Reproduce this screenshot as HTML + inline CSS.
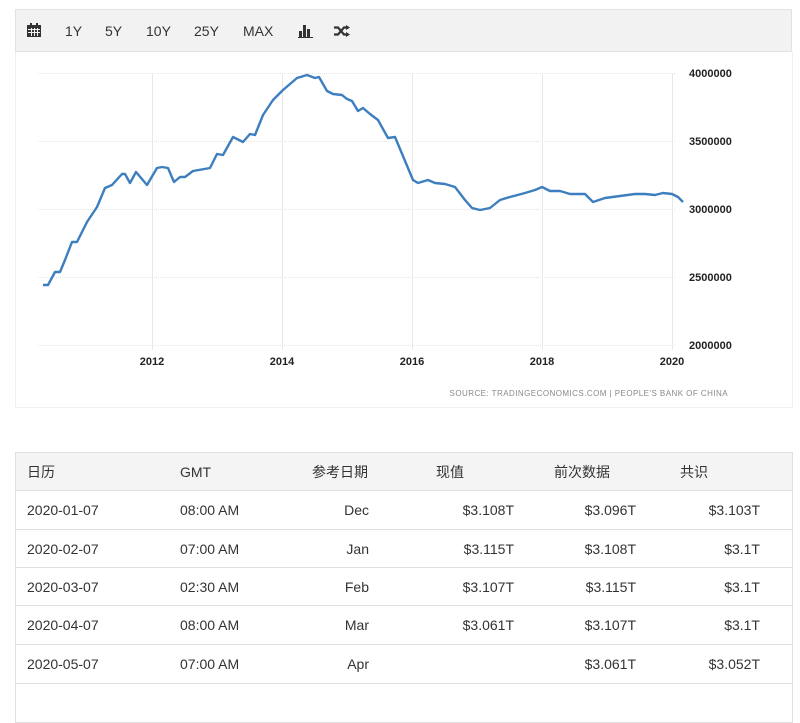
<!DOCTYPE html>
<html><head><meta charset="utf-8"><style>
body{margin:0;width:800px;height:691px;background:#fff;font-family:"Liberation Sans","Noto Sans CJK SC",sans-serif;overflow:hidden;position:relative}
.tb{position:absolute;left:15px;top:9px;width:777px;height:43px;background:#f2f2f2;border:1px solid #e2e2e2;box-sizing:border-box}
.tb span{position:absolute;top:13px;font-size:14px;color:#333}
.chart{position:absolute;left:15px;top:52px;width:778px;height:356px;border:1px solid #f0f0f0;border-top:none;box-sizing:border-box}
.row{position:absolute;left:15px;width:778px;height:39px;border:1px solid #e0e0e0;border-top:none;box-sizing:border-box;font-size:14px;color:#333}
.row.h{background:#f4f4f4;border-top:1px solid #e0e0e0}
.row span{position:absolute;top:11px;white-space:nowrap;line-height:16px}
.row .a{left:11px}.row .b{left:164px}
.row .c{right:423px}.row .d{right:278px}.row .e{right:156px}.row .f{right:32px}
</style></head><body>
<div class="tb">
<svg style="position:absolute;left:11px;top:13px" width="14" height="14" viewBox="0 0 14 14"><rect x="0" y="2" width="14" height="12" fill="#333"/><rect x="3" y="0" width="2" height="3" fill="#333"/><rect x="9" y="0" width="2" height="3" fill="#333"/><g fill="#f2f2f2"><rect x="1" y="6" width="12" height="1"/><rect x="1" y="9" width="12" height="1"/><rect x="4" y="5" width="1" height="8"/><rect x="7" y="5" width="1" height="8"/><rect x="10" y="5" width="1" height="8"/></g></svg>
<span style="left:49px">1Y</span><span style="left:89px">5Y</span><span style="left:130px">10Y</span><span style="left:178px">25Y</span><span style="left:227px">MAX</span>
<svg style="position:absolute;left:282px;top:14px" width="15" height="14" viewBox="0 0 15 14"><rect x="1" y="7" width="3" height="6" fill="#333"/><rect x="5" y="1" width="3" height="12" fill="#333"/><rect x="9" y="5" width="3" height="8" fill="#333"/><rect x="0" y="13" width="15" height="1" fill="#333"/></svg>
<svg style="position:absolute;left:318px;top:15px" width="16" height="12" viewBox="0 0 16 12"><path d="M0 2.5h4l6 7h3M0 9.5h4l6-7h3" stroke="#333" stroke-width="2.2" fill="none"/><path d="M12 0l4 2.5-4 2.5zM12 7l4 2.5-4 2.5z" fill="#333"/></svg>
</div>
<div class="chart"></div>
<svg style="position:absolute;left:0;top:0" width="800" height="410">
<g stroke="#e4e4e4" stroke-width="1" stroke-dasharray="1 1">
<line x1="38" y1="73.5" x2="676" y2="73.5"/><line x1="38" y1="141.5" x2="676" y2="141.5"/><line x1="38" y1="209.5" x2="676" y2="209.5"/><line x1="38" y1="277.5" x2="676" y2="277.5"/><line x1="38" y1="345.5" x2="676" y2="345.5"/></g>
<g stroke="#e8e8e8"><line x1="152.5" y1="73" x2="152.5" y2="350"/><line x1="282.5" y1="73" x2="282.5" y2="350"/><line x1="412.5" y1="73" x2="412.5" y2="350"/><line x1="542.5" y1="73" x2="542.5" y2="350"/><line x1="672.5" y1="73" x2="672.5" y2="350"/></g>
<polyline fill="none" stroke="#3d7ebf" stroke-width="2.4" stroke-linejoin="round" points="43,285 48,285 55,272 60,272 65,260 72,242 77,242 87,222 97,207 105,188 112,185 122,174 125,174 130,183 136,172 147,185 157,168 162,167 168,168 174,182 180,177 185,177 193,171 210,168 217,154 223,155 233,137 243,142 250,134 255,135 263,115 273,100 283,90 297,78 307,75 315,78 319,77 327,91 333,94 342,95 347,99 352,101 358,111 363,108 370,114 378,120 388,138 395,137 413,180 418,183 428,180 435,183 445,184 455,187 465,200 472,208 480,210 490,208 500,200 510,197 525,193 535,190 542,187 550,191 560,191 570,194 585,194 593,202 605,198 620,196 635,194 645,194 655,195 663,193 672,194 678,197 683,202"/>
<g font-family="Liberation Sans" font-size="11" fill="#222" font-weight="bold">
<text x="689" y="77">4000000</text><text x="689" y="145">3500000</text><text x="689" y="213">3000000</text><text x="689" y="281">2500000</text><text x="689" y="349">2000000</text>
<text x="152" y="365" text-anchor="middle">2012</text><text x="282" y="365" text-anchor="middle">2014</text><text x="412" y="365" text-anchor="middle">2016</text><text x="542" y="365" text-anchor="middle">2018</text><text x="672" y="365" text-anchor="middle">2020</text></g>
<text x="728" y="396" text-anchor="end" font-family="Liberation Sans" font-size="8" fill="#888" letter-spacing="0.45">SOURCE: TRADINGECONOMICS.COM  |  PEOPLE'S BANK OF CHINA</text>
</svg>
<div class="row h" style="top:452px"><span class="a">日历</span><span class="b">GMT</span><span style="left:296px">参考日期</span><span style="left:420px">现值</span><span style="left:538px">前次数据</span><span style="left:664px">共识</span></div>
<div class="row" style="top:491px"><span class="a">2020-01-07</span><span class="b">08:00 AM</span><span class="c">Dec</span><span class="d">$3.108T</span><span class="e">$3.096T</span><span class="f">$3.103T</span></div>
<div class="row" style="top:530px;height:38px"><span class="a">2020-02-07</span><span class="b">07:00 AM</span><span class="c">Jan</span><span class="d">$3.115T</span><span class="e">$3.108T</span><span class="f">$3.1T</span></div>
<div class="row" style="top:568px;height:38px"><span class="a">2020-03-07</span><span class="b">02:30 AM</span><span class="c">Feb</span><span class="d">$3.107T</span><span class="e">$3.115T</span><span class="f">$3.1T</span></div>
<div class="row" style="top:606px"><span class="a">2020-04-07</span><span class="b">08:00 AM</span><span class="c">Mar</span><span class="d">$3.061T</span><span class="e">$3.107T</span><span class="f">$3.1T</span></div>
<div class="row" style="top:645px"><span class="a">2020-05-07</span><span class="b">07:00 AM</span><span class="c">Apr</span><span class="e">$3.061T</span><span class="f">$3.052T</span></div>
<div class="row" style="top:684px"></div>
</body></html>
